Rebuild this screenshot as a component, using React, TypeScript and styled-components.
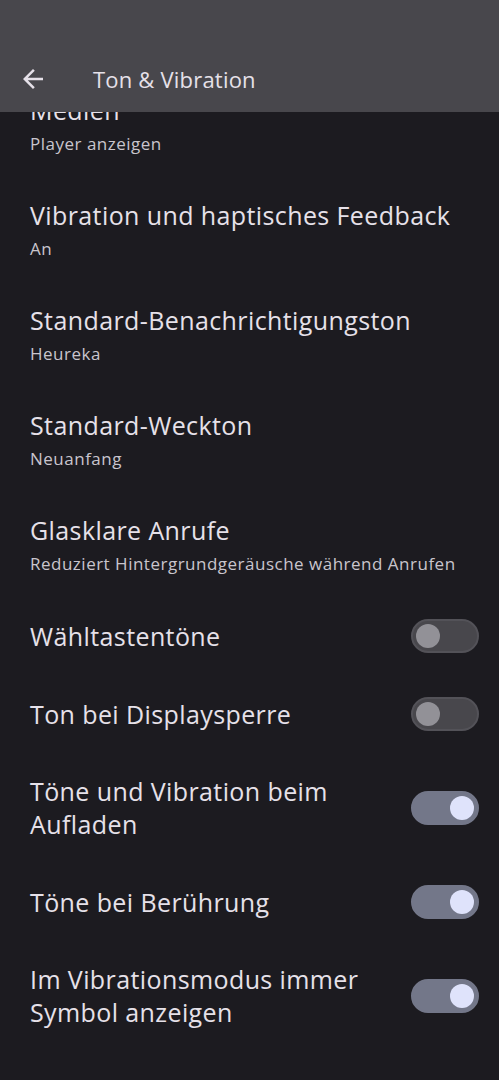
import React from 'react';
import styled, { createGlobalStyle } from 'styled-components';

const GlobalStyle = createGlobalStyle`
  html, body {
    margin: 0;
    padding: 0;
    background: #1c1b20;
  }
  body {
    font-family: 'Open Sans', Roboto, 'Noto Sans', sans-serif;
    -webkit-font-smoothing: antialiased;
  }
`;

const Screen = styled.div`
  width: 499px;
  height: 1080px;
  overflow: hidden;
  background: #1c1b20;
  color: #e6e1e9;
  display: flex;
  flex-direction: column;
`;

const TopBar = styled.header`
  position: relative;
  z-index: 2;
  height: 112px;
  flex: none;
  background: #48474c;
  display: flex;
  align-items: flex-end;
  padding: 0 0 9px 0;
  box-sizing: border-box;
`;

const BackButton = styled.button`
  width: 48px;
  height: 48px;
  margin-left: 9px;
  border: none;
  background: transparent;
  padding: 0;
  display: flex;
  align-items: center;
  justify-content: center;
  color: #e6e1e9;
`;

const Title = styled.h1`
  margin: 0 0 0 36px;
  font-size: 22px;
  font-weight: 400;
  letter-spacing: 0.2px;
  line-height: 48px;
  color: #e6e1e9;
`;

const List = styled.div`
  margin-top: -40px;
  display: flex;
  flex-direction: column;
`;

const TextItem = styled.div`
  padding: 22px 30px;
  display: flex;
  flex-direction: column;
  gap: 7px;
`;

const ItemTitle = styled.div`
  font-size: 25px;
  letter-spacing: 0.4px;
  line-height: 32px;
  color: #e6e1e9;
`;

const ItemSummary = styled.div`
  font-size: 17px;
  letter-spacing: 0.5px;
  line-height: 22px;
  color: #c9c5cd;
`;

const SwitchRow = styled.div`
  padding: 22px 20px 22px 30px;
  display: flex;
  align-items: center;
  justify-content: space-between;
  gap: 24px;
`;

const SwitchLabel = styled.div`
  font-size: 25px;
  letter-spacing: 0.4px;
  line-height: 33px;
  color: #e6e1e9;
  max-width: 340px;
`;

const Track = styled.div<{ $on: boolean }>`
  flex: none;
  width: 68px;
  height: 34px;
  box-sizing: border-box;
  border-radius: 17px;
  border: 2px solid ${(p) => (p.$on ? '#737789' : '#535258')};
  background: ${(p) => (p.$on ? '#737789' : '#48474c')};
  display: flex;
  align-items: center;
  justify-content: ${(p) => (p.$on ? 'flex-end' : 'flex-start')};
  padding: 0 3px;
`;

const Knob = styled.div<{ $on: boolean }>`
  width: 24px;
  height: 24px;
  border-radius: 50%;
  background: ${(p) => (p.$on ? '#dfe3fb' : '#929197')};
`;

const ArrowBack = () => (
  <svg width="30" height="30" viewBox="0 0 24 24" fill="currentColor">
    <path d="M20 11H7.83l5.59-5.59L12 4l-8 8 8 8 1.41-1.41L7.83 13H20v-2z" />
  </svg>
);

const Switch = ({ on }: { on: boolean }) => (
  <Track $on={on}>
    <Knob $on={on} />
  </Track>
);

const textItems = [
  { title: 'Medien', summary: 'Player anzeigen' },
  { title: 'Vibration und haptisches Feedback', summary: 'An' },
  { title: 'Standard-Benachrichtigungston', summary: 'Heureka' },
  { title: 'Standard-Weckton', summary: 'Neuanfang' },
  { title: 'Glasklare Anrufe', summary: 'Reduziert Hintergrundgeräusche während Anrufen' },
];

const switchItems = [
  { label: 'Wähltastentöne', on: false },
  { label: 'Ton bei Displaysperre', on: false },
  { label: 'Töne und Vibration beim Aufladen', on: true },
  { label: 'Töne bei Berührung', on: true },
  { label: 'Im Vibrationsmodus immer Symbol anzeigen', on: true },
];

const App = () => {
  return (
    <>
      <GlobalStyle />
      <Screen>
        <TopBar>
          <BackButton aria-label="Zurück">
            <ArrowBack />
          </BackButton>
          <Title>Ton &amp; Vibration</Title>
        </TopBar>
        <List>
          {textItems.map((item) => (
            <TextItem key={item.title}>
              <ItemTitle>{item.title}</ItemTitle>
              <ItemSummary>{item.summary}</ItemSummary>
            </TextItem>
          ))}
          {switchItems.map((item) => (
            <SwitchRow key={item.label}>
              <SwitchLabel>{item.label}</SwitchLabel>
              <Switch on={item.on} />
            </SwitchRow>
          ))}
        </List>
      </Screen>
    </>
  );
};

export default App;
